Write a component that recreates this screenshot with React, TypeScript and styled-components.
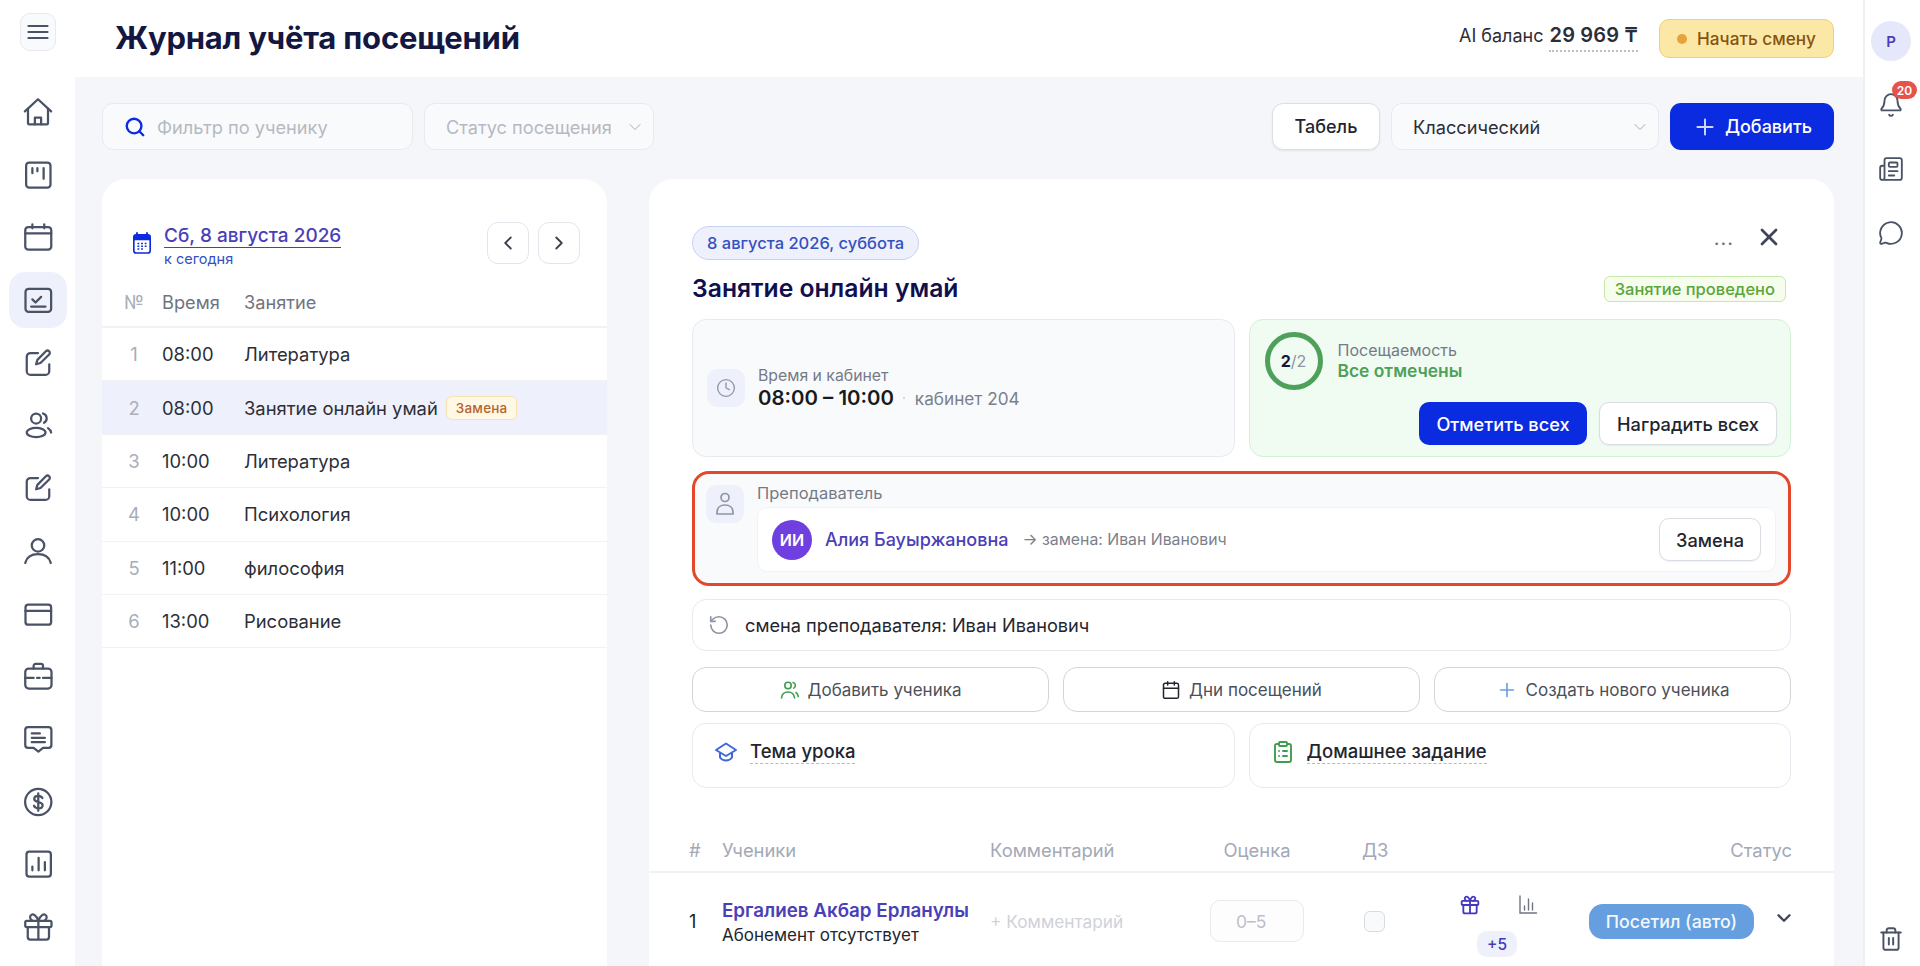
import React from "react";
import styled, { createGlobalStyle } from "styled-components";
import {
  Search,
  ChevronLeft,
  ChevronRight,
  ChevronDown,
  X,
  Plus,
  Clock,
  RotateCcw,
  Calendar,
  ClipboardList,
  Bell,
  Newspaper,
  MessageCircle,
  Trash2,
} from "lucide-react";

const ink = "#14173f";
const iconGrey = "#4a5266";
const violet = "#4a3fb8";
const blue = "#0b2be0";
const line = "#e8eaef";

const GlobalStyle = createGlobalStyle`
  html, body {
    margin: 0;
    padding: 0;
    height: 100%;
    overflow: hidden;
  }
  body {
    font-family: Inter, "Noto Sans", sans-serif;
    color: #1a1c24;
    background: #fff;
  }
  * { box-sizing: border-box; }
`;

const Shell = styled.div`
  display: flex;
  height: 100vh;
  overflow: hidden;
`;

const Sidebar = styled.aside`
  width: 75px;
  flex: none;
  padding-top: 13px;
  display: flex;
  flex-direction: column;
  align-items: center;
`;

const MenuButton = styled.div`
  width: 36px;
  height: 38px;
  border-radius: 10px;
  border: 1px solid ${line};
  background: #f9fafc;
  display: flex;
  align-items: center;
  justify-content: center;
  color: ${iconGrey};
`;

const Nav = styled.nav`
  margin-top: 33px;
  display: flex;
  flex-direction: column;
  gap: 6.7px;
`;

const NavItem = styled.div<{ $active?: boolean }>`
  width: 58px;
  height: 56px;
  border-radius: 16px;
  display: flex;
  align-items: center;
  justify-content: center;
  color: ${iconGrey};
  background: ${(p) => (p.$active ? "#eef1fb" : "transparent")};
`;

const Main = styled.div`
  flex: 1;
  min-width: 0;
  display: flex;
  flex-direction: column;
`;

const Header = styled.header`
  height: 77px;
  flex: none;
  display: flex;
  align-items: center;
  padding: 0 29px 2px 40px;
`;

const PageTitle = styled.h1`
  margin: 0;
  font-size: 31px;
  font-weight: 700;
  letter-spacing: -0.2px;
  color: ${ink};
  flex: 1;
`;

const Balance = styled.div`
  display: flex;
  align-items: baseline;
  gap: 6px;
  font-size: 18px;
  color: #2b2e38;
  margin-right: 21px;
`;

const BalanceValue = styled.span`
  font-size: 20px;
  font-weight: 600;
  letter-spacing: 0.2px;
  padding-bottom: 3px;
  border-bottom: 2px dotted #b9bdc7;
`;

const ShiftButton = styled.div`
  width: 175px;
  height: 39px;
  margin-top: 2px;
  border-radius: 10px;
  background: #fbe8a6;
  border: 1px solid #efcf7e;
  color: #87540f;
  font-size: 17.2px;
  font-weight: 500;
  display: flex;
  align-items: center;
  justify-content: center;
  gap: 10px;
`;

const ShiftDot = styled.span`
  width: 10px;
  height: 10px;
  border-radius: 50%;
  background: #e8a23a;
`;

const Content = styled.main`
  flex: 1;
  min-height: 0;
  background: #f4f6f9;
  padding: 26px 29px 0 27px;
  display: flex;
  flex-direction: column;
`;

const Toolbar = styled.div`
  height: 47px;
  flex: none;
  display: flex;
  align-items: stretch;
  gap: 11px;
`;

const Spacer = styled.div`
  flex: 1;
`;

const Field = styled.div<{ $width: number }>`
  width: ${(p) => p.$width}px;
  border: 1px solid ${line};
  border-radius: 11px;
  background: #f9fafc;
  display: flex;
  align-items: center;
  font-size: 18.2px;
  color: #b5b9c3;
  padding: 0 8px 0 21px;
  gap: 11px;
`;

const FieldValue = styled.span<{ $dark?: boolean }>`
  flex: 1;
  color: ${(p) => (p.$dark ? "#2b2e38" : "#b5b9c3")};
  white-space: nowrap;
`;

const ToolButton = styled.div`
  width: 108px;
  border-radius: 11px;
  background: #fff;
  border: 1px solid #dcdfe5;
  box-shadow: 0 1px 2px rgba(20, 23, 63, 0.08);
  font-size: 18px;
  font-weight: 500;
  color: #23252e;
  display: flex;
  align-items: center;
  justify-content: center;
`;

const AddButton = styled.div`
  width: 164px;
  border-radius: 11px;
  background: ${blue};
  color: #fff;
  font-size: 18px;
  font-weight: 500;
  display: flex;
  align-items: center;
  justify-content: center;
  gap: 7px;
`;

const Columns = styled.div`
  flex: 1;
  min-height: 0;
  margin-top: 29px;
  display: grid;
  grid-template-columns: 505px 1fr;
  gap: 42px;
`;

const Card = styled.section`
  background: #fff;
  border-radius: 24px 24px 0 0;
  overflow: hidden;
`;

const DateRow = styled.div`
  height: 85px;
  display: flex;
  align-items: center;
  padding: 43px 27px 0 30px;
`;

const DateText = styled.div`
  flex: 1;
  margin: 3px 0 -3px 12px;
  display: flex;
  flex-direction: column;
  align-items: flex-start;
  color: ${violet};
`;

const DateLink = styled.span`
  font-size: 19px;
  font-weight: 500;
  line-height: 22px;
  border-bottom: 1.5px solid ${violet};
`;

const TodayLink = styled.span`
  font-size: 14.5px;
  line-height: 19px;
  margin-top: 1px;
  color: #3550c0;
`;

const ArrowButton = styled.div`
  width: 42px;
  height: 42px;
  margin-left: 9px;
  border-radius: 11px;
  border: 1px solid #e3e5ea;
  display: flex;
  align-items: center;
  justify-content: center;
  color: #3a3f4d;
`;

const lessonColumns = `
  display: grid;
  grid-template-columns: 60px 82px 1fr;
  align-items: center;
  font-size: 18.4px;
`;

const LessonHead = styled.div`
  ${lessonColumns}
  height: 64px;
  align-items: end;
  padding-bottom: 12px;
  line-height: 24px;
  border-bottom: 2px solid #f1f2f5;
  font-size: 18.2px;
  color: #70747f;
`;

const LessonNum = styled.span`
  padding: 0 18px 0 22px;
  text-align: center;
  color: #a9aebb;
`;

const LessonRow = styled.div<{ $selected?: boolean }>`
  ${lessonColumns}
  height: 53.4px;
  border-bottom: 1px solid #f1f2f5;
  background: ${(p) => (p.$selected ? "#eef1fb" : "transparent")};
  color: #2d2f38;
`;

const LessonName = styled.div`
  display: flex;
  align-items: center;
  gap: 8px;
  white-space: nowrap;
`;

const ReplaceBadge = styled.span`
  font-size: 13.5px;
  font-weight: 500;
  letter-spacing: 0.2px;
  color: #b5652a;
  background: #fff8e5;
  border: 1px solid #f7e2b0;
  border-radius: 6px;
  height: 24px;
  padding: 0 9px;
  display: inline-flex;
  align-items: center;
`;

const PanelBody = styled.div`
  padding: 47px 43px 0 43px;
`;

const PanelTop = styled.div`
  display: flex;
  align-items: center;
  justify-content: space-between;
`;

const DatePill = styled.span`
  height: 34px;
  padding: 0 14px;
  border-radius: 17px;
  background: #eef1fc;
  border: 1px solid #c6d1f3;
  color: #3550c0;
  font-size: 16.5px;
  font-weight: 500;
  display: flex;
  align-items: center;
`;

const PanelActions = styled.div`
  display: flex;
  align-items: center;
  gap: 21px;
  color: #3f4658;
  margin: -12px 8px 0 0;
`;

const Dots = styled.span`
  font-size: 20px;
  line-height: 20px;
  color: #6a6f7c;
  letter-spacing: 1px;
  margin-top: 2px;
`;

const TitleRow = styled.div`
  margin-top: 11px;
  height: 34px;
  display: flex;
  align-items: center;
  justify-content: space-between;
`;

const LessonTitle = styled.h2`
  margin: 0;
  font-size: 24.7px;
  font-weight: 600;
  color: #10104f;
`;

const DoneBadge = styled.span`
  height: 26px;
  margin: 2px 5px 0 0;
  padding: 0 10px;
  border-radius: 6px;
  background: #f6fdec;
  border: 1px solid #c6e8a8;
  color: #5aa63a;
  font-size: 16.5px;
  font-weight: 500;
  display: flex;
  align-items: center;
`;

const InfoGrid = styled.div`
  margin-top: 14px;
  display: grid;
  grid-template-columns: 1fr 1fr;
  gap: 14px;
`;

const TimeCard = styled.div`
  height: 138px;
  border-radius: 14px;
  border: 1px solid ${line};
  background: #f9fafc;
  padding: 0 14px;
  display: flex;
  align-items: center;
  gap: 13px;
`;

const IconTile = styled.div`
  width: 38px;
  height: 38px;
  flex: none;
  border-radius: 11px;
  background: #eef1fb;
  color: #8f95a5;
  display: flex;
  align-items: center;
  justify-content: center;
`;

const Caption = styled.div`
  font-size: 15.8px;
  line-height: 20px;
  color: #757a87;
`;

const TimeLine = styled.div`
  display: flex;
  align-items: baseline;
  line-height: 24px;
`;

const TimeValue = styled.span`
  font-size: 20.4px;
  font-weight: 600;
  color: #181a22;
  white-space: nowrap;
`;

const RoomLabel = styled.span`
  font-size: 17.2px;
  color: #7b7f8b;
  margin-left: 21px;
  position: relative;

  &::before {
    content: "";
    position: absolute;
    left: -12px;
    top: 10px;
    width: 2px;
    height: 2px;
    border-radius: 50%;
    background: #c7cad2;
  }
`;

const AttendanceCard = styled.div`
  height: 138px;
  border-radius: 14px;
  border: 1px solid #d2f0d6;
  background: #f0fbf2;
  padding: 12px 13px 11px 15px;
  display: flex;
  flex-direction: column;
  justify-content: space-between;
`;

const AttendanceTop = styled.div`
  display: flex;
  align-items: center;
  gap: 15px;
`;

const Ring = styled.div`
  width: 58px;
  height: 58px;
  border-radius: 50%;
  border: 5px solid #4ea05a;
  display: flex;
  align-items: center;
  justify-content: center;
  font-size: 16px;
  font-weight: 700;
  color: #14173f;
`;

const RingTotal = styled.span`
  font-weight: 400;
  color: #8d93a3;
`;

const AttendanceLabel = styled(Caption)`
  font-size: 16px;
`;

const AttendanceStatus = styled.div`
  font-size: 17.4px;
  line-height: 22px;
  font-weight: 600;
  color: #4ea05a;
`;

const AttendanceButtons = styled.div`
  display: flex;
  justify-content: flex-end;
  gap: 12px;
`;

const PrimaryButton = styled.div`
  width: 168px;
  height: 43px;
  border-radius: 10px;
  background: ${blue};
  color: #fff;
  font-size: 18.2px;
  font-weight: 500;
  display: flex;
  align-items: center;
  justify-content: center;
`;

const GhostButton = styled.div<{ $width: number }>`
  width: ${(p) => p.$width}px;
  height: 43px;
  border-radius: 10px;
  background: #fff;
  border: 1px solid #d9dce2;
  box-shadow: 0 1px 2px rgba(20, 23, 63, 0.06);
  color: #23252e;
  font-size: 18.2px;
  font-weight: 500;
  display: flex;
  align-items: center;
  justify-content: center;
`;

const TeacherCard = styled.div`
  margin-top: 14px;
  height: 115px;
  border: 3px solid #e5472b;
  border-radius: 17px;
  background: #f9fafc;
  padding: 8px 12px 0 11px;
  display: flex;
  gap: 13px;
`;

const TeacherTile = styled(IconTile)`
  margin-top: 3px;
`;

const TeacherBody = styled.div`
  flex: 1;
  min-width: 0;
`;

const TeacherLabel = styled(Caption)`
  line-height: 22px;
  font-size: 16.5px;
`;

const TeacherBox = styled.div`
  margin-top: 3px;
  height: 65px;
  border-radius: 10px;
  border: 1px solid #f2f3f6;
  background: #fff;
  padding: 0 14px 0 14px;
  display: flex;
  align-items: center;
`;

const Avatar = styled.div`
  width: 40px;
  height: 40px;
  border-radius: 50%;
  background: #6f3fe0;
  color: #fff;
  font-size: 16px;
  font-weight: 600;
  display: flex;
  align-items: center;
  justify-content: center;
`;

const TeacherName = styled.span`
  margin-left: 13px;
  font-size: 18px;
  font-weight: 500;
  color: ${violet};
`;

const Substitute = styled.span`
  margin-left: 14px;
  flex: 1;
  font-size: 15.8px;
  color: #7b7f8b;
`;

const HistoryRow = styled.div`
  margin-top: 13px;
  height: 52px;
  border-radius: 14px;
  border: 1px solid ${line};
  background: #fff;
  padding: 0 15px;
  display: flex;
  align-items: center;
  gap: 15px;
  font-size: 18.2px;
  color: #23252e;
`;

const HistoryIcon = styled.span`
  display: flex;
  color: #8f95a5;
`;

const ActionGrid = styled.div`
  margin-top: 16px;
  display: grid;
  grid-template-columns: repeat(3, 1fr);
  gap: 14px;
`;

const ActionButton = styled.div`
  height: 45px;
  border-radius: 14px;
  border: 1px solid #d3d5db;
  background: #fff;
  display: flex;
  align-items: center;
  justify-content: center;
  gap: 8px;
  font-size: 17px;
  color: #4b4f5c;
`;

const NoteGrid = styled.div`
  margin-top: 11px;
  display: grid;
  grid-template-columns: 1fr 1fr;
  gap: 14px;
`;

const NoteCard = styled.div`
  height: 65px;
  border-radius: 14px;
  border: 1px solid ${line};
  background: #fff;
  padding: 0 0 8px 21px;
  display: flex;
  align-items: center;
  gap: 12px;
`;

const NoteText = styled.span`
  font-size: 18.5px;
  font-weight: 500;
  color: #23252e;
  border-bottom: 1.5px dashed #b6b9c2;
  line-height: 23px;
`;

const tableColumns = `
  display: grid;
  grid-template-columns: 33px 268px 220px 152px 98px 129px 1fr;
  padding: 0 42px 0 40px;
`;

const TableHead = styled.div`
  ${tableColumns}
  margin-top: 41px;
  height: 44px;
  align-items: end;
  padding-bottom: 9px;
  line-height: 24px;
  border-bottom: 2px solid #f1f2f5;
  font-size: 18.4px;
  color: #a3a9b6;
`;

const GradeHead = styled.span`
  width: 94px;
  text-align: center;
`;

const StatusHead = styled.span`
  text-align: right;
`;

const TableRow = styled.div`
  ${tableColumns}
  height: 96px;
  align-items: center;
`;

const RowNum = styled.span`
  font-size: 18px;
  color: #1a1c24;
`;

const StudentCell = styled.div`
  padding-top: 3px;
`;

const StudentName = styled.div`
  font-size: 18.8px;
  font-weight: 600;
  color: ${violet};
  line-height: 24px;
  white-space: nowrap;
`;

const StudentNote = styled.div`
  font-size: 17px;
  line-height: 24px;
  color: #23252e;
  white-space: nowrap;
`;

const CommentHint = styled.span`
  font-size: 17.3px;
  color: #cfd2d9;
`;

const GradeInput = styled.div`
  width: 94px;
  height: 42px;
  border: 1px solid ${line};
  border-radius: 10px;
  background: #fdfdfe;
  color: #bcc0c9;
  font-size: 17.5px;
  padding-left: 25px;
  display: flex;
  align-items: center;
`;

const HomeworkBox = styled.div`
  width: 21px;
  height: 21px;
  margin-left: 2px;
  border: 1px solid #d8dae0;
  border-radius: 6px;
  background: #f9fafc;
`;

const RewardCell = styled.div`
  align-self: start;
  margin-top: 22px;
`;

const RewardIcons = styled.div`
  display: flex;
  gap: 38px;
`;

const RewardGift = styled.span`
  display: flex;
  color: #4438c0;
`;

const RewardChart = styled.span`
  display: flex;
  color: #6f7482;
`;

const BonusTag = styled.div`
  margin: 16px 0 0 17px;
  width: 40px;
  height: 26px;
  border-radius: 10px;
  background: #eef1fb;
  color: #4438c0;
  font-size: 15.5px;
  font-weight: 500;
  display: flex;
  align-items: center;
  justify-content: center;
`;

const StatusCell = styled.div`
  display: flex;
  align-items: center;
  gap: 19px;
`;

const StatusPill = styled.div`
  width: 165px;
  height: 35px;
  border-radius: 14px;
  background: #659fe0;
  color: #f2f7fd;
  font-size: 17.8px;
  font-weight: 500;
  display: flex;
  align-items: center;
  justify-content: center;
`;

const StatusArrow = styled.span`
  display: flex;
  color: #3f4658;
  margin-top: -6px;
`;

const Rail = styled.aside`
  width: 57px;
  flex: none;
  border-left: 2px solid #eef0f4;
  padding: 21px 3px 14px 0;
  display: flex;
  flex-direction: column;
  align-items: center;
  color: ${iconGrey};
`;

const UserBadge = styled.div`
  width: 40px;
  height: 40px;
  border-radius: 50%;
  background: #e4e8fa;
  color: ${violet};
  font-size: 15px;
  font-weight: 600;
  display: flex;
  align-items: center;
  justify-content: center;
`;

const RailItem = styled.div`
  position: relative;
  width: 32px;
  height: 32px;
  margin-top: 32px;
  display: flex;
  align-items: center;
  justify-content: center;
`;

const BellItem = styled(RailItem)`
  margin-top: 28px;
`;

const Count = styled.span`
  position: absolute;
  top: -8px;
  left: 17px;
  width: 25px;
  height: 18px;
  border-radius: 9px;
  background: #e5534b;
  color: #fff;
  font-size: 12px;
  font-weight: 600;
  display: flex;
  align-items: center;
  justify-content: center;
`;

const TrashItem = styled.div`
  margin-top: auto;
  display: flex;
`;

const NavSvg = ({ children }: { children: React.ReactNode }) => (
  <svg
    width="30"
    height="30"
    viewBox="0 0 24 24"
    fill="none"
    stroke="currentColor"
    strokeWidth="1.8"
    strokeLinecap="round"
    strokeLinejoin="round"
  >
    {children}
  </svg>
);

const editIcon = (
  <>
    <path d="M12 4H6a3 3 0 0 0-3 3v11.5a3 3 0 0 0 3 3h12a3 3 0 0 0 3-3V13" />
    <path d="M18.3 2.6a1.8 1.8 0 0 1 2.6 2.6L14 12l-3.5 1 1-3.5z" />
  </>
);

const navIcons: React.ReactNode[] = [
  <>
    <path d="M1.5 11.5 12 1.8l10.5 9.7" />
    <path d="M4 9.5V21a.8.8 0 0 0 .8.8h14.4a.8.8 0 0 0 .8-.8V9.5" />
    <path d="M9.5 21.8v-5.3h5v5.3" />
  </>,
  <>
    <rect x="2.5" y="2" width="19.5" height="20" rx="2.5" />
    <path d="M7.5 6.5v4M11.5 6.5v2.5M16.5 6.5V15" />
  </>,
  <>
    <rect x="1.8" y="4" width="20.8" height="18" rx="2.5" />
    <path d="M1.8 9h20.8M7.5 1.8V5M17 1.8V5" />
  </>,
  <>
    <rect x="2" y="3" width="20.5" height="18.5" rx="2.5" />
    <path d="m7.5 11.5 2.5 2.5 4.5-4.5M6.5 17.2h11.5" />
  </>,
  editIcon,
  <>
    <circle cx="10.5" cy="6.8" r="4" />
    <ellipse cx="10.5" cy="18" rx="7.5" ry="3.7" />
    <path d="M16 2.8a4 4 0 0 1 .8 7.4M20 14.5c1.5 1 2.3 2.2 2.5 3.5" />
  </>,
  editIcon,
  <>
    <circle cx="12" cy="7.5" r="5" />
    <path d="M1.8 21.5c1.2-4.6 5.3-7 10.2-7s9 2.4 10.2 7" />
  </>,
  <>
    <rect x="2" y="4.5" width="20.5" height="16" rx="2.2" />
    <path d="M2 9.5h20.5" />
  </>,
  <>
    <rect x="1.8" y="6" width="21" height="16" rx="2.8" />
    <path d="M8.5 6V3.8a1.5 1.5 0 0 1 1.5-1.5h4.5a1.5 1.5 0 0 1 1.5 1.5V6M1.8 13.5h6.7M11.3 13.5h2M16 13.5h6.8" />
  </>,
  <>
    <path d="M4 2.5h16.5a2.3 2.3 0 0 1 2.2 2.3v12a2.3 2.3 0 0 1-2.2 2.3H16l-3.7 3-3.8-3H4a2.3 2.3 0 0 1-2.2-2.3v-12A2.3 2.3 0 0 1 4 2.5z" />
    <path d="M7 7.5h6.5M7 11h10.5M7 14.5h10.5" />
  </>,
  <>
    <circle cx="12.2" cy="12" r="10.5" />
    <path d="M15.5 8.8c-.6-1.2-1.8-1.8-3.3-1.8-1.9 0-3.2 1-3.2 2.5 0 3.4 6.7 1.6 6.7 5 0 1.5-1.4 2.5-3.4 2.5-1.6 0-2.9-.7-3.5-2M12.2 5v14" />
  </>,
  <>
    <rect x="2.8" y="2" width="19.5" height="20" rx="2.2" />
    <path d="M7.5 17v-3M12.5 17V7M17.5 17v-6.5" />
  </>,
  <>
    <rect x="1.8" y="7" width="21" height="5" rx="1.2" />
    <path d="M3.8 12v8a2 2 0 0 0 2 2h13a2 2 0 0 0 2-2v-8M12.3 7v15M12.3 7C10.5 2 8 1.5 6.7 2.3c-1.7 1-1.3 3.8 1 4.7M12.3 7c1.8-5 4.3-5.5 5.6-4.7 1.7 1 1.3 3.8-1 4.7" />
  </>,
];

const lessons = [
  { num: 1, time: "08:00", name: "Литература" },
  { num: 2, time: "08:00", name: "Занятие онлайн умай", replaced: true },
  { num: 3, time: "10:00", name: "Литература" },
  { num: 4, time: "10:00", name: "Психология" },
  { num: 5, time: "11:00", name: "философия" },
  { num: 6, time: "13:00", name: "Рисование" },
];

const DateIcon = () => (
  <svg width="20" height="24" viewBox="0 0 22 26" fill="none">
    <path d="M5.5 2v4M16.5 2v4" stroke={blue} strokeWidth="2" strokeLinecap="round" />
    <rect x="2" y="4" width="18" height="20" rx="2.5" stroke={blue} strokeWidth="1.8" />
    <path d="M2 6.5A2.5 2.5 0 0 1 4.5 4h13A2.5 2.5 0 0 1 20 6.5V10H2z" fill={blue} />
    <path
      d="M6 13.5h2M10 13.5h2M14 13.5h2M6 16.5h2M10 16.5h2M14 16.5h2M6 19.5h2M10 19.5h2"
      stroke={blue}
      strokeWidth="1.7"
    />
  </svg>
);

const PersonIcon = () => (
  <svg width="24" height="26" viewBox="0 0 24 26" fill="none" stroke="currentColor" strokeWidth="1.7">
    <circle cx="12" cy="6.5" r="4" />
    <path d="M4 23v-1.5C4 16.5 7.5 14 12 14s8 2.5 8 7.5V23z" strokeLinejoin="round" />
  </svg>
);

const StudentAddIcon = () => (
  <svg width="20" height="20" viewBox="0 0 20 20" fill="none" stroke="#3f9d4f" strokeWidth="1.6" strokeLinecap="round">
    <circle cx="8" cy="5.5" r="3.2" />
    <path d="M1.5 18c.4-4 3-6 6.5-6s6.1 2 6.5 6M13 2.5a3 3 0 0 1 .8 5.6M16 12.5c1.3.8 2 2.5 2.3 4" />
  </svg>
);

const CapIcon = () => (
  <svg width="24" height="24" viewBox="0 0 24 24" fill="none" stroke="#3f69d8" strokeWidth="2" strokeLinejoin="round">
    <path d="M12 3.5 22 10l-10 6L2 10z" />
    <path d="M6 13v4.5c1.5 2 3.5 3 6 3s4.5-1 6-3V13" />
  </svg>
);

const GiftIcon = () => (
  <svg width="20" height="20" viewBox="0 0 24 24" fill="none" stroke="currentColor" strokeWidth="2.2" strokeLinecap="round" strokeLinejoin="round">
    <rect x="2" y="7" width="20" height="5" rx="1" />
    <path d="M4 12v8a2 2 0 0 0 2 2h12a2 2 0 0 0 2-2v-8M12 7v15M12 7C10.5 2 8 1.5 6.7 2.3c-1.7 1-1.3 3.7 1 4.7M12 7c1.5-5 4-5.500 5.300-4.700 1.700 1 1.300 3.700-1 4.700" />
  </svg>
);

const ChartIcon = () => (
  <svg width="20" height="20" viewBox="0 0 20 20" fill="none" stroke="currentColor" strokeWidth="1.4" strokeLinecap="round">
    <path d="M2 1v17h16.5M6.5 15v-4M10.5 15V4M14.5 15V8" />
  </svg>
);

export default function App() {
  return (
    <Shell>
      <GlobalStyle />
      <Sidebar>
        <MenuButton>
          <svg width="22" height="16" viewBox="0 0 22 16" stroke="currentColor" strokeWidth="2.2" strokeLinecap="round">
            <path d="M1.5 2h19M1.5 8h19M1.5 14h19" />
          </svg>
        </MenuButton>
        <Nav>
          {navIcons.map((icon, i) => (
            <NavItem key={i} $active={i === 3}>
              <NavSvg>{icon}</NavSvg>
            </NavItem>
          ))}
        </Nav>
      </Sidebar>

      <Main>
        <Header>
          <PageTitle>Журнал учёта посещений</PageTitle>
          <Balance>
            AI баланс <BalanceValue>29 969 ₸</BalanceValue>
          </Balance>
          <ShiftButton>
            <ShiftDot />
            Начать смену
          </ShiftButton>
        </Header>

        <Content>
          <Toolbar>
            <Field $width={311}>
              <Search size={22} color={blue} strokeWidth={2.6} />
              <FieldValue>Фильтр по ученику</FieldValue>
            </Field>
            <Field $width={230}>
              <FieldValue>Статус посещения</FieldValue>
              <ChevronDown size={20} color="#a9adb7" strokeWidth={1.2} />
            </Field>
            <Spacer />
            <ToolButton>Табель</ToolButton>
            <Field $width={268}>
              <FieldValue $dark>Классический</FieldValue>
              <ChevronDown size={20} color="#a9adb7" strokeWidth={1.2} />
            </Field>
            <AddButton>
              <Plus size={26} strokeWidth={1.8} color="#cfd8fb" />
              Добавить
            </AddButton>
          </Toolbar>

          <Columns>
            <Card>
              <DateRow>
                <DateIcon />
                <DateText>
                  <DateLink>Сб, 8 августа 2026</DateLink>
                  <TodayLink>к сегодня</TodayLink>
                </DateText>
                <ArrowButton>
                  <ChevronLeft size={22} />
                </ArrowButton>
                <ArrowButton>
                  <ChevronRight size={22} />
                </ArrowButton>
              </DateRow>
              <LessonHead>
                <LessonNum>№</LessonNum>
                <span>Время</span>
                <span>Занятие</span>
              </LessonHead>
              {lessons.map((l) => (
                <LessonRow key={l.num} $selected={l.replaced}>
                  <LessonNum>{l.num}</LessonNum>
                  <span>{l.time}</span>
                  <LessonName>
                    {l.name}
                    {l.replaced && <ReplaceBadge>Замена</ReplaceBadge>}
                  </LessonName>
                </LessonRow>
              ))}
            </Card>

            <Card>
              <PanelBody>
                <PanelTop>
                  <DatePill>8 августа 2026, суббота</DatePill>
                  <PanelActions>
                    <Dots>...</Dots>
                    <X size={28} strokeWidth={2.4} />
                  </PanelActions>
                </PanelTop>
                <TitleRow>
                  <LessonTitle>Занятие онлайн умай</LessonTitle>
                  <DoneBadge>Занятие проведено</DoneBadge>
                </TitleRow>

                <InfoGrid>
                  <TimeCard>
                    <IconTile>
                      <Clock size={20} strokeWidth={1.6} />
                    </IconTile>
                    <div>
                      <Caption>Время и кабинет</Caption>
                      <TimeLine>
                        <TimeValue>08:00 – 10:00</TimeValue>
                        <RoomLabel>кабинет 204</RoomLabel>
                      </TimeLine>
                    </div>
                  </TimeCard>
                  <AttendanceCard>
                    <AttendanceTop>
                      <Ring>
                        2<RingTotal>/2</RingTotal>
                      </Ring>
                      <div>
                        <AttendanceLabel>Посещаемость</AttendanceLabel>
                        <AttendanceStatus>Все отмечены</AttendanceStatus>
                      </div>
                    </AttendanceTop>
                    <AttendanceButtons>
                      <PrimaryButton>Отметить всех</PrimaryButton>
                      <GhostButton $width={178}>Наградить всех</GhostButton>
                    </AttendanceButtons>
                  </AttendanceCard>
                </InfoGrid>

                <TeacherCard>
                  <TeacherTile>
                    <PersonIcon />
                  </TeacherTile>
                  <TeacherBody>
                    <TeacherLabel>Преподаватель</TeacherLabel>
                    <TeacherBox>
                      <Avatar>ИИ</Avatar>
                      <TeacherName>Алия Бауыржановна</TeacherName>
                      <Substitute>→ замена: Иван Иванович</Substitute>
                      <GhostButton $width={102}>Замена</GhostButton>
                    </TeacherBox>
                  </TeacherBody>
                </TeacherCard>

                <HistoryRow>
                  <HistoryIcon>
                    <RotateCcw size={22} strokeWidth={1.8} />
                  </HistoryIcon>
                  смена преподавателя: Иван Иванович
                </HistoryRow>

                <ActionGrid>
                  <ActionButton>
                    <StudentAddIcon />
                    Добавить ученика
                  </ActionButton>
                  <ActionButton>
                    <Calendar size={20} color="#23252e" strokeWidth={1.8} />
                    Дни посещений
                  </ActionButton>
                  <ActionButton>
                    <Plus size={22} color="#6a9fe0" strokeWidth={1.8} />
                    Создать нового ученика
                  </ActionButton>
                </ActionGrid>

                <NoteGrid>
                  <NoteCard>
                    <CapIcon />
                    <NoteText>Тема урока</NoteText>
                  </NoteCard>
                  <NoteCard>
                    <ClipboardList size={24} color="#3f9d4f" strokeWidth={1.9} />
                    <NoteText>Домашнее задание</NoteText>
                  </NoteCard>
                </NoteGrid>
              </PanelBody>

              <TableHead>
                <span>#</span>
                <span>Ученики</span>
                <span>Комментарий</span>
                <GradeHead>Оценка</GradeHead>
                <span>ДЗ</span>
                <span />
                <StatusHead>Статус</StatusHead>
              </TableHead>
              <TableRow>
                <RowNum>1</RowNum>
                <StudentCell>
                  <StudentName>Ергалиев Акбар Ерланулы</StudentName>
                  <StudentNote>Абонемент отсутствует</StudentNote>
                </StudentCell>
                <CommentHint>+ Комментарий</CommentHint>
                <GradeInput>0–5</GradeInput>
                <HomeworkBox />
                <RewardCell>
                  <RewardIcons>
                    <RewardGift>
                      <GiftIcon />
                    </RewardGift>
                    <RewardChart>
                      <ChartIcon />
                    </RewardChart>
                  </RewardIcons>
                  <BonusTag>+5</BonusTag>
                </RewardCell>
                <StatusCell>
                  <StatusPill>Посетил (авто)</StatusPill>
                  <StatusArrow>
                    <ChevronDown size={22} strokeWidth={2.6} />
                  </StatusArrow>
                </StatusCell>
              </TableRow>
            </Card>
          </Columns>
        </Content>
      </Main>

      <Rail>
        <UserBadge>Р</UserBadge>
        <BellItem>
          <Bell size={26} strokeWidth={1.7} />
          <Count>20</Count>
        </BellItem>
        <RailItem>
          <Newspaper size={26} strokeWidth={1.7} />
        </RailItem>
        <RailItem>
          <MessageCircle size={26} strokeWidth={1.7} />
        </RailItem>
        <TrashItem>
          <Trash2 size={26} strokeWidth={1.8} />
        </TrashItem>
      </Rail>
    </Shell>
  );
}
